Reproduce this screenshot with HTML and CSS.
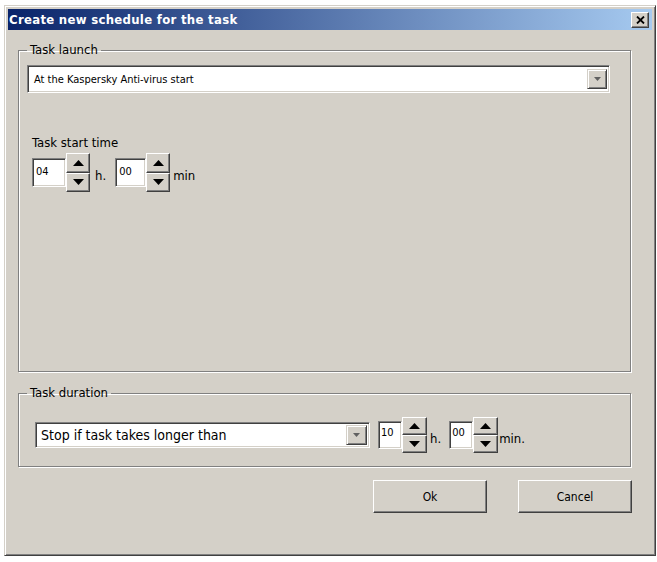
FILE: index.html
```html
<!DOCTYPE html>
<html lang="en">
<head>
    <meta charset="UTF-8">
    <title>Create new schedule for the task</title>
    <link rel="stylesheet" href="styles.css">
</head>
<body>
    <div class="window">
        <div class="titlebar">
            <span class="title">Create new schedule for the task</span>
            <span class="close-btn">
                <svg width="9" height="8" viewBox="0 0 9 8"><path d="M1 0.5 L8 7.5 M8 0.5 L1 7.5" stroke="#000" stroke-width="1.8"/></svg>
            </span>
        </div>
        <div class="client">
            <fieldset class="group group-launch">
                <legend>Task launch</legend>
                <div class="combo combo-launch">
                    <span class="combo-text">At the Kaspersky Anti-virus start</span>
                    <span class="drop-btn"><svg width="7" height="4" viewBox="0 0 7 4"><path d="M0 0 H7 L3.5 4 Z" fill="#606060"/></svg></span>
                </div>
                <div class="start-time">
                    <div class="start-label">Task start time</div>
                    <div class="time-row">
                        <div class="spin">
                            <div class="edit">04</div>
                            <div class="spin-btns">
                                <span class="arrow-btn"><svg width="11" height="6" viewBox="0 0 11 6"><path d="M0 6 L5.5 0 L11 6 Z"/></svg></span>
                                <span class="arrow-btn"><svg width="11" height="6" viewBox="0 0 11 6"><path d="M0 0 L5.5 6 L11 0 Z"/></svg></span>
                            </div>
                        </div>
                        <span class="unit">h.</span>
                        <div class="spin">
                            <div class="edit edit-w31">00</div>
                            <div class="spin-btns">
                                <span class="arrow-btn"><svg width="11" height="6" viewBox="0 0 11 6"><path d="M0 6 L5.5 0 L11 6 Z"/></svg></span>
                                <span class="arrow-btn"><svg width="11" height="6" viewBox="0 0 11 6"><path d="M0 0 L5.5 6 L11 0 Z"/></svg></span>
                            </div>
                        </div>
                        <span class="unit unit-min">min</span>
                    </div>
                </div>
            </fieldset>

            <fieldset class="group group-duration">
                <legend>Task duration</legend>
                <div class="duration-row">
                    <div class="combo combo-duration">
                        <span class="combo-text">Stop if task takes longer than</span>
                        <span class="drop-btn"><svg width="7" height="4" viewBox="0 0 7 4"><path d="M0 0 H7 L3.5 4 Z" fill="#606060"/></svg></span>
                    </div>
                    <div class="spin spin-small">
                        <div class="edit">10</div>
                        <div class="spin-btns">
                            <span class="arrow-btn"><svg width="11" height="6" viewBox="0 0 11 6"><path d="M0 6 L5.5 0 L11 6 Z"/></svg></span>
                            <span class="arrow-btn"><svg width="11" height="6" viewBox="0 0 11 6"><path d="M0 0 L5.5 6 L11 0 Z"/></svg></span>
                        </div>
                    </div>
                    <span class="unit">h.</span>
                    <div class="spin spin-small">
                        <div class="edit">00</div>
                        <div class="spin-btns">
                            <span class="arrow-btn"><svg width="11" height="6" viewBox="0 0 11 6"><path d="M0 6 L5.5 0 L11 6 Z"/></svg></span>
                            <span class="arrow-btn"><svg width="11" height="6" viewBox="0 0 11 6"><path d="M0 0 L5.5 6 L11 0 Z"/></svg></span>
                        </div>
                    </div>
                    <span class="unit unit-min">min.</span>
                </div>
            </fieldset>

            <div class="buttons">
                <button class="btn">Ok</button>
                <button class="btn">Cancel</button>
            </div>
        </div>
    </div>
</body>
</html>
```

FILE: styles.css
```css
body {
    margin: 0;
    background: #fff;
    font-family: "DejaVu Sans Condensed", "DejaVu Sans", sans-serif;
    color: #000;
}

.window {
    margin: 5px 0 0 4px;
    width: 644px;
    height: 543px;
    background: #d4d0c8;
    border: 1px solid;
    border-color: #d4d0c8 #404040 #404040 #d4d0c8;
    box-shadow: inset 1px 1px 0 #fff, inset -1px -1px 0 #808080;
    padding: 3px;
}

.titlebar {
    height: 21px;
    display: flex;
    align-items: center;
    justify-content: space-between;
    padding: 0 3px 0 1px;
    background: linear-gradient(to right, #0a246a, #a6caf0);
}

.title {
    color: #fff;
    font-weight: bold;
    font-size: 13px;
    letter-spacing: 0.3px;
}

.close-btn {
    width: 16px;
    height: 14px;
    display: flex;
    align-items: center;
    justify-content: center;
    background: #d4d0c8;
    border: 1px solid;
    border-color: #fff #404040 #404040 #fff;
    box-shadow: inset -1px -1px 0 #808080;
}

.client {
    padding: 12px 0 0 10px;
}

.group {
    margin: 0;
    min-width: 0;
    width: 613px;
    box-sizing: border-box;
    border: 1px solid #808080;
    box-shadow: inset 1px 1px 0 #fff, 1px 1px 0 #fff;
}

.group legend {
    padding: 0 3px;
    font-size: 13px;
    line-height: 16px;
}

.group-launch {
    height: 330px;
    padding: 7px 0 0 8px;
}

.group-launch legend {
    margin-left: 0;
}

.combo {
    display: flex;
    align-items: center;
    justify-content: space-between;
    background: #fff;
    border: 1px solid;
    border-color: #808080 #fff #fff #808080;
    box-shadow: inset 1px 1px 0 #404040, inset -1px -1px 0 #d4d0c8;
    box-sizing: border-box;
}

.combo-launch {
    width: 583px;
    height: 28px;
    font-size: 11px;
    padding: 0 2px 0 6px;
}

.combo-duration {
    width: 335px;
    height: 26px;
    font-size: 14px;
    padding: 0 2px 0 5px;
}

.drop-btn {
    width: 20px;
    height: 20px;
    display: flex;
    align-items: center;
    justify-content: center;
    background: #d4d0c8;
    border: 1px solid;
    border-color: #d4d0c8 #404040 #404040 #d4d0c8;
    box-shadow: inset 1px 1px 0 #fff, inset -1px -1px 0 #808080;
    box-sizing: border-box;
}

.combo-duration .drop-btn {
    width: 21px;
}

.start-time {
    margin: 42px 0 0 5px;
}

.start-label {
    font-size: 13px;
    line-height: 16px;
}

.time-row {
    display: flex;
    align-items: center;
    margin-top: 2px;
    height: 39px;
}

.spin {
    display: flex;
    align-items: center;
}

.edit {
    height: 29px;
    width: 34px;
    background: #fff;
    border: 1px solid;
    border-color: #808080 #fff #fff #808080;
    box-shadow: inset 1px 1px 0 #404040, inset -1px -1px 0 #d4d0c8;
    box-sizing: border-box;
    font-size: 11px;
    padding: 6px 0 0 3px;
}

.edit-w31 {
    width: 31px;
}

.spin-btns {
    display: flex;
    flex-direction: column;
    width: 24px;
    height: 39px;
}

.arrow-btn {
    flex: 1;
    display: flex;
    align-items: center;
    justify-content: center;
    background: #d4d0c8;
    border: 1px solid;
    border-color: #fff #404040 #404040 #fff;
    box-shadow: inset -1px -1px 0 #808080;
}

.unit {
    font-size: 13px;
    margin: 6px 9px 0 5px;
}

.unit-min {
    margin-left: 3px;
}

.group-duration {
    margin-top: 13px;
    padding: 16px 0 13px 16px;
}

.group-duration legend {
    margin-left: -8px;
}

.duration-row {
    display: flex;
    align-items: center;
    height: 36px;
}

.spin-small {
    margin-left: 8px;
}

.spin-small .edit {
    width: 24px;
    height: 28px;
    padding: 4px 0 0 2px;
}

.spin-small .spin-btns {
    width: 25px;
    height: 36px;
}

.spin-small + .unit {
    margin: 6px 0 0 3px;
}

.duration-row .unit-min {
    margin-left: 1px;
}

.buttons {
    display: flex;
    justify-content: flex-end;
    gap: 31px;
    margin: 13px 20px 0 0;
}

.btn {
    width: 114px;
    height: 33px;
    font-family: inherit;
    font-size: 12px;
    color: #000;
    background: #d4d0c8;
    border: 1px solid;
    border-color: #fff #404040 #404040 #fff;
    box-shadow: inset -1px -1px 0 #808080;
}
```
